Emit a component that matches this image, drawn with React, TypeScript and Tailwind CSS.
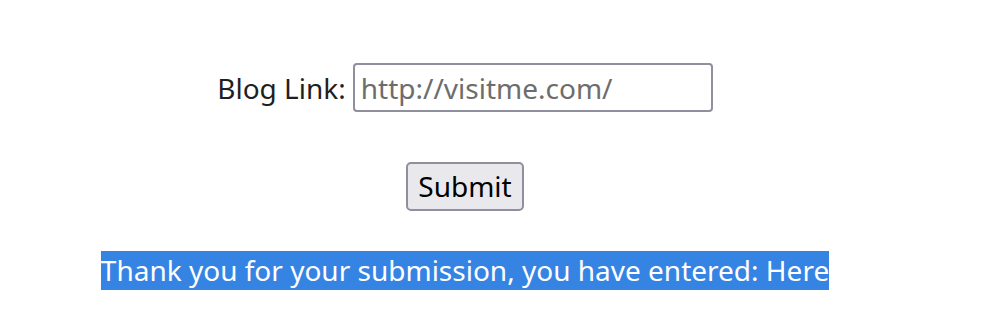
const App = () => {
  return (
    <div className="w-[930px] pt-[63px] flex flex-col items-center font-['Noto_Sans',sans-serif] text-[28px] text-[#1f1f1f]">
      <div className="flex items-center gap-[7px] h-[49px]">
        <label htmlFor="blog">Blog Link:</label>
        <input
          id="blog"
          type="text"
          placeholder="http://visitme.com/"
          className="w-[360px] h-[49px] px-[6px] border-2 border-[#8f8f9d] rounded-[4px] bg-white placeholder:text-[#6d6d6d] outline-none"
        />
      </div>
      <button className="mt-[50px] h-[49px] px-[10px] bg-[#e9e9ed] border-2 border-[#8f8f9d] rounded-[5px] text-black leading-[45px]">
        Submit
      </button>
      <p className="mt-[40px] h-[39px] leading-[39px] bg-[#3584e4] text-white">
        Thank you for your submission, you have entered: Here
      </p>
    </div>
  );
};

export default App;
